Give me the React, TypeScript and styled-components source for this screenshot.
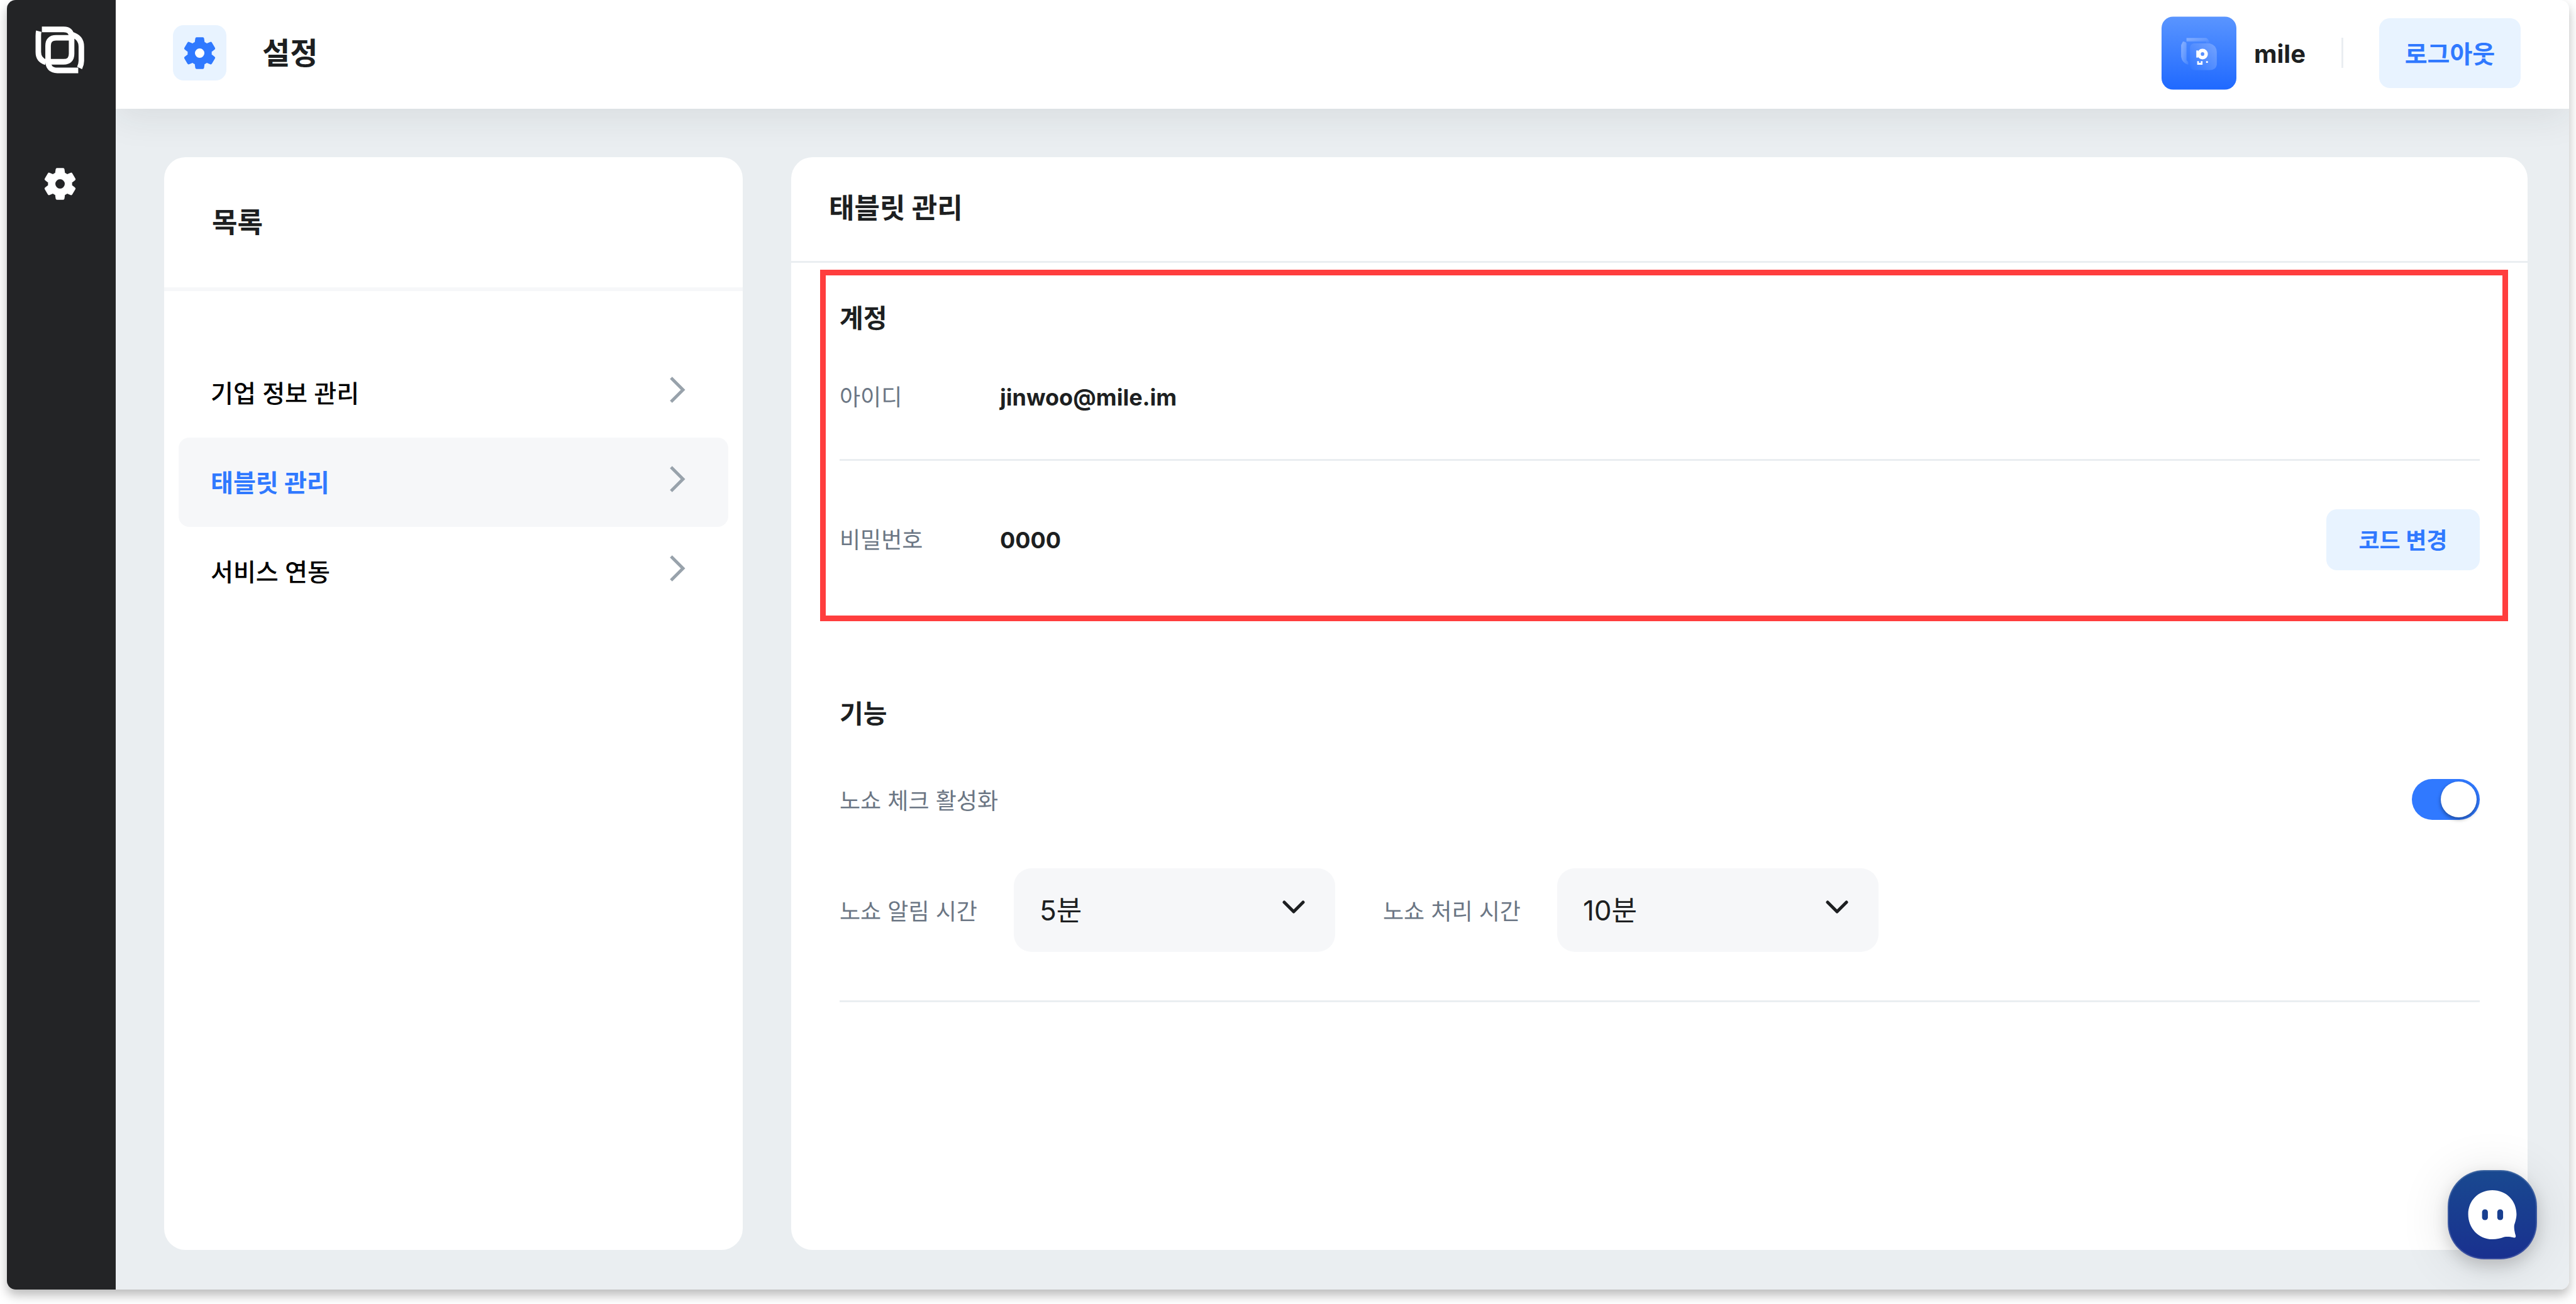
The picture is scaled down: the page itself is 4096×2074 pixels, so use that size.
import React, { useState } from "react";
import styled, { createGlobalStyle } from "styled-components";

const color = {
  ink: "#1d1f21",
  muted: "#6b7684",
  blue: "#3079ff",
  paleBlue: "#e8f3ff",
  canvas: "#eaeef1",
  field: "#f6f7f9",
  rail: "#232426",
};

const GlobalStyle = createGlobalStyle`
  *, *::before, *::after { box-sizing: border-box; }
  body {
    margin: 0;
    background: #fff;
    color: ${color.ink};
    font-family: Inter, "Noto Sans CJK KR", sans-serif;
  }
  button, select, input { font-family: inherit; margin: 0; }
  h1, h2, h3, p, ul { margin: 0; padding: 0; }
`;

const Page = styled.div`
  height: 100vh;
  padding: 0 11px 23px;
`;

const Frame = styled.div`
  position: relative;
  display: flex;
  height: 100%;
  border-radius: 14px;
  box-shadow: 0 9px 17px rgba(0, 0, 0, 0.27);
`;

const Rail = styled.nav`
  flex: none;
  width: 173px;
  padding: 40px 5px 0 0;
  display: flex;
  flex-direction: column;
  align-items: center;
  gap: 145px;
  background: ${color.rail};
  border-radius: 14px 0 0 14px;
  svg { display: block; }
`;

const RailLink = styled.a`
  display: block;
  color: #fff;
`;

const Body = styled.div`
  flex: 1;
  min-width: 0;
  display: flex;
  flex-direction: column;
  background: ${color.canvas};
  border-radius: 0 14px 14px 0;
  overflow: hidden;
`;

const TopBar = styled.header`
  flex: none;
  height: 173px;
  padding: 0 77px 5px 91px;
  display: flex;
  align-items: center;
  background: #fff;
  box-shadow: 0 12px 60px rgba(30, 40, 45, 0.09);
`;

const IconTile = styled.span`
  width: 85px;
  height: 88px;
  display: grid;
  place-items: center;
  border-radius: 17px;
  background: ${color.paleBlue};
  color: ${color.blue};
`;

const PageTitle = styled.h1`
  flex: 1;
  padding: 2px 0 0 57px;
  font-size: 48px;
  line-height: 64px;
  font-weight: 700;
`;

const UserName = styled.span`
  padding: 3px 0 0 28px;
  font-size: 40px;
  line-height: 56px;
  font-weight: 700;
`;

const TopDivider = styled.span`
  width: 3px;
  height: 48px;
  margin: 0 57px;
  background: ${color.canvas};
`;

const SoftButton = styled.button<{ $large?: boolean }>`
  flex: none;
  width: ${(p) => (p.$large ? 225 : 244)}px;
  height: ${(p) => (p.$large ? 111 : 97)}px;
  padding: 3px 0 0;
  border: 0;
  border-radius: 17px;
  background: ${color.paleBlue};
  color: ${color.blue};
  font-size: ${(p) => (p.$large ? 39 : 36)}px;
  line-height: 56px;
  font-weight: 700;
`;

const Content = styled.main`
  flex: 1;
  min-height: 0;
  padding: 77px 66px 63px 77px;
  display: flex;
  gap: 77px;
`;

const Card = styled.section<{ $narrow?: boolean }>`
  flex: ${(p) => (p.$narrow ? "0 0 920px" : "1 1 0")};
  min-width: 0;
  border-radius: 34px;
  background: #fff;
`;

const ListHead = styled.h2`
  padding: 72px 76px 71px;
  border-bottom: 6px solid ${color.field};
  font-size: 44px;
  line-height: 64px;
  font-weight: 700;
`;

const CardHead = styled.h2`
  padding: 49px 60px 52px;
  border-bottom: 3px solid ${color.canvas};
  font-size: 44px;
  line-height: 64px;
  font-weight: 700;
`;

const Menu = styled.ul`
  padding: 91px 23px 0;
  list-style: none;
`;

const MenuLink = styled.a<{ $active?: boolean }>`
  display: flex;
  align-items: center;
  justify-content: space-between;
  height: 142px;
  padding: 2px 67px 0 51px;
  border-radius: 17px;
  background: ${(p) => (p.$active ? color.field : "transparent")};
  color: ${(p) => (p.$active ? color.blue : "#000")};
  font-size: 39px;
  line-height: 56px;
  font-weight: ${(p) => (p.$active ? 700 : 500)};
  text-decoration: none;
  svg { display: block; margin-bottom: 12px; }
`;

const Account = styled.section`
  margin: 11px 31px 0 46px;
  padding: 40px 36px 72px 22px;
  border: 9px solid #ff3e3e;
`;

const Features = styled.section`
  margin: 119px 76px 0 77px;
  border-bottom: 3px solid ${color.canvas};
  padding-bottom: 77px;
`;

const SectionTitle = styled.h3`
  font-size: 41px;
  line-height: 56px;
  font-weight: 700;
`;

const InfoRow = styled.div<{ $ruled?: boolean }>`
  display: flex;
  align-items: center;
  padding: ${(p) => (p.$ruled ? "70px 0 70px" : "77px 0 0")};
  border-bottom: ${(p) => (p.$ruled ? `3px solid ${color.canvas}` : "0")};
`;

const Term = styled.span`
  width: 255px;
  color: ${color.muted};
  font-size: 36px;
  line-height: 56px;
`;

const Value = styled.span`
  flex: 1;
  font-size: 36px;
  line-height: 56px;
  font-weight: 700;
`;

const ToggleRow = styled.div`
  display: flex;
  align-items: center;
  justify-content: space-between;
  padding: 76px 0 77px;
`;

const FieldLabel = styled.label`
  padding-top: 4px;
  color: ${color.muted};
  font-size: 36px;
  line-height: 56px;
`;

const Switch = styled.input`
  appearance: none;
  width: 108px;
  height: 65px;
  padding: 4px 5px;
  border-radius: 33px;
  background: #c8ced3;
  display: flex;
  align-items: center;
  &::before {
    content: "";
    width: 57px;
    height: 57px;
    border-radius: 50%;
    background: #fff;
    box-shadow: 0 3px 6px rgba(0, 0, 0, 0.4);
  }
  &:checked {
    background: ${color.blue};
    justify-content: flex-end;
  }
`;

const SelectRow = styled.div`
  display: flex;
  gap: 76px;
`;

const SelectField = styled.div`
  display: flex;
  align-items: center;
  gap: 58px;
`;

const SelectBox = styled.div`
  display: grid;
  align-items: center;
  width: 511px;
  svg {
    grid-area: 1 / 1;
    justify-self: end;
    margin: 0 48px 10px 0;
    pointer-events: none;
  }
`;

const Select = styled.select`
  grid-area: 1 / 1;
  appearance: none;
  width: 100%;
  height: 133px;
  padding: 0 100px 0 41px;
  border: 0;
  border-radius: 28px;
  background: ${color.field};
  color: ${color.ink};
  font-size: 44px;
  line-height: 64px;
`;

const ChatButton = styled.button`
  position: absolute;
  right: 51px;
  bottom: 48px;
  width: 142px;
  height: 142px;
  padding: 0;
  border: 2px solid rgba(255, 255, 255, 0.15);
  border-radius: 58px;
  background: linear-gradient(#194990, #19308f) border-box;
  box-shadow: 0 10px 24px rgba(0, 0, 0, 0.16), 0 8px 80px rgba(0, 0, 0, 0.12);
  svg { display: block; }
`;

const Gear = ({ hole }: { hole?: string }) => (
  <svg width="61" height="61" viewBox="0 0 24 24" aria-hidden="true">
    {hole && <circle cx="12" cy="12" r="5" fill={hole} />}
    <path
      fill="currentColor"
      stroke="currentColor"
      strokeWidth="0.7"
      strokeLinejoin="round"
      d="M19.14 12.94c.04-.3.06-.61.06-.94 0-.32-.02-.64-.07-.94l2.03-1.58a.49.49 0 0 0 .12-.61l-1.92-3.32a.488.488 0 0 0-.59-.22l-2.39.96c-.5-.38-1.03-.7-1.62-.94l-.36-2.54a.484.484 0 0 0-.48-.41h-3.84c-.24 0-.43.17-.47.41l-.36 2.54c-.59.24-1.13.57-1.62.94l-2.39-.96c-.22-.08-.47 0-.59.22L2.74 8.87c-.12.21-.08.47.12.61l2.03 1.58c-.05.3-.09.63-.09.94s.02.64.07.94l-2.03 1.58a.49.49 0 0 0-.12.61l1.92 3.32c.12.22.37.29.59.22l2.39-.96c.5.38 1.03.7 1.62.94l.36 2.54c.05.24.24.41.48.41h3.84c.24 0 .44-.17.47-.41l.36-2.54c.59-.24 1.13-.56 1.62-.94l2.39.96c.22.08.47 0 .59-.22l1.92-3.32c.12-.22.07-.47-.12-.61l-2.01-1.58zM12 15.3c-1.82 0-3.3-1.48-3.3-3.3s1.48-3.3 3.3-3.3 3.3 1.48 3.3 3.3-1.48 3.300-3.3 3.300z"
    />
  </svg>
);

const Logo = () => (
  <svg width="79" height="77" viewBox="0 0 112 108" fill="none" stroke="#fff" strokeWidth="12.5" aria-hidden="true">
    <path d="M15 9H64Q82 9 82 27V64Q82 82 64 82H33" />
    <path d="M8 13Q7 17 7 24V60Q7 78 24 83" />
    <path d="M97 101.500H50Q29 101.500 29 80V46Q29 28 47 28H78" />
    <path d="M80 20Q104 26 104 48V80Q104 88 100 96" />
  </svg>
);

const Avatar = () => (
  <svg width="119" height="117" viewBox="0 0 168 164" role="img" aria-label="mile">
    <defs>
      <linearGradient id="avatarFill" x1="0" y1="0" x2="0" y2="1">
        <stop offset="0" stopColor="#5a95ff" />
        <stop offset="1" stopColor="#1f69ff" />
      </linearGradient>
      <linearGradient id="backSheet" x1="0" y1="0" x2="1" y2="1">
        <stop offset="0" stopColor="#8ab2ff" />
        <stop offset="1" stopColor="#4585ff" />
      </linearGradient>
      <linearGradient id="frontSheet" x1="1" y1="0" x2="0" y2="1">
        <stop offset="0" stopColor="#75a4ff" />
        <stop offset="1" stopColor="#3278ff" />
      </linearGradient>
    </defs>
    <rect width="168" height="164" rx="26" fill="url(#avatarFill)" />
    <path d="M56 48H100Q106 50 108 60H100V56H56Z" fill="url(#backSheet)" />
    <path d="M48 56Q54 56 56 60V98L60 102V108Q46 104 44 90V64Z" fill="url(#backSheet)" />
    <path d="M72 60H108Q124 64 124 80V108Q122 120 108 120H74Q64 120 64 108V70Q64 62 72 60Z" fill="url(#frontSheet)" />
    <circle cx="92" cy="84" r="8" fill="none" stroke="#fff" strokeWidth="8" />
    <path d="M80 76V92" stroke="#fff" strokeWidth="4" />
    <path d="M82 100V106H90V100M100 102H104" fill="none" stroke="#fff" strokeWidth="4" />
  </svg>
);

const ChevronRight = () => (
  <svg width="28" height="44" viewBox="0 0 28 44" fill="none" aria-hidden="true">
    <path d="M4 3L23 22L4 41" stroke="#98a2ab" strokeWidth="5" />
  </svg>
);

const ChevronDown = () => (
  <svg width="36" height="24" viewBox="0 0 36 24" fill="none" aria-hidden="true">
    <path d="M3 4L18 19L33 4" stroke={color.ink} strokeWidth="5" strokeLinecap="round" strokeLinejoin="round" />
  </svg>
);

const ChatFace = () => (
  <svg width="138" height="138" viewBox="3 3 194 194" aria-hidden="true">
    <path
      d="M100 45C131 45 154 68 154 99C154 108 151 117 149 123C148 130 150 140 152 146C153 151 151 152 147 151C139 149 132 149 126 150C118 153 110 155 100 155C69 155 46 130 46 99C46 68 69 45 100 45Z"
      fill="#fff"
    />
    <rect x="77" y="88" width="13" height="24" rx="6" fill="#193f90" />
    <rect x="111" y="88" width="13" height="24" rx="6" fill="#193f90" />
  </svg>
);

const menu = ["기업 정보 관리", "태블릿 관리", "서비스 연동"];

const selects = [
  { id: "alert", label: "노쇼 알림 시간", value: "5분" },
  { id: "process", label: "노쇼 처리 시간", value: "10분" },
];

export default function App() {
  const [active, setActive] = useState("태블릿 관리");
  return (
    <Page>
      <GlobalStyle />
      <Frame>
        <Rail>
          <Logo />
          <RailLink href="#settings" aria-label="설정">
            <Gear />
          </RailLink>
        </Rail>
        <Body>
          <TopBar>
            <IconTile>
              <Gear hole="#fff" />
            </IconTile>
            <PageTitle>설정</PageTitle>
            <Avatar />
            <UserName>mile</UserName>
            <TopDivider />
            <SoftButton type="button" $large>로그아웃</SoftButton>
          </TopBar>
          <Content>
            <Card $narrow>
              <ListHead>목록</ListHead>
              <Menu>
                {menu.map((name) => (
                  <li key={name}>
                    <MenuLink href="#list" $active={name === active} onClick={() => setActive(name)}>
                      {name}
                      <ChevronRight />
                    </MenuLink>
                  </li>
                ))}
              </Menu>
            </Card>
            <Card>
              <CardHead>태블릿 관리</CardHead>
              <Account>
                <SectionTitle>계정</SectionTitle>
                <InfoRow $ruled>
                  <Term>아이디</Term>
                  <Value>jinwoo@mile.im</Value>
                </InfoRow>
                <InfoRow>
                  <Term>비밀번호</Term>
                  <Value>0000</Value>
                  <SoftButton type="button">코드 변경</SoftButton>
                </InfoRow>
              </Account>
              <Features>
                <SectionTitle>기능</SectionTitle>
                <ToggleRow>
                  <FieldLabel htmlFor="noshow">노쇼 체크 활성화</FieldLabel>
                  <Switch id="noshow" type="checkbox" defaultChecked />
                </ToggleRow>
                <SelectRow>
                  {selects.map((s) => (
                    <SelectField key={s.id}>
                      <FieldLabel htmlFor={s.id}>{s.label}</FieldLabel>
                      <SelectBox>
                        <Select id={s.id} defaultValue={s.value}>
                          <option>{s.value}</option>
                        </Select>
                        <ChevronDown />
                      </SelectBox>
                    </SelectField>
                  ))}
                </SelectRow>
              </Features>
            </Card>
          </Content>
        </Body>
        <ChatButton type="button" aria-label="채팅 상담">
          <ChatFace />
        </ChatButton>
      </Frame>
    </Page>
  );
}
